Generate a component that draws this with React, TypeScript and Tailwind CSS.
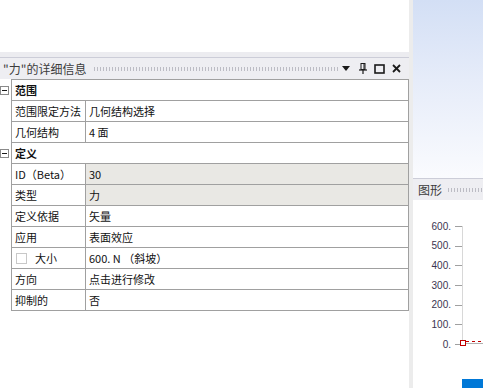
import React from "react";

type Row =
  | { kind: "group"; label: string }
  | { kind: "item"; label: string; value: string; gray?: boolean; check?: boolean };

const rows: Row[] = [
  { kind: "group", label: "范围" },
  { kind: "item", label: "范围限定方法", value: "几何结构选择" },
  { kind: "item", label: "几何结构", value: "4 面" },
  { kind: "group", label: "定义" },
  { kind: "item", label: "ID（Beta）", value: "30", gray: true },
  { kind: "item", label: "类型", value: "力", gray: true },
  { kind: "item", label: "定义依据", value: "矢量" },
  { kind: "item", label: "应用", value: "表面效应" },
  { kind: "item", label: "大小", value: "600. N （斜坡）", check: true },
  { kind: "item", label: "方向", value: "点击进行修改" },
  { kind: "item", label: "抑制的", value: "否" },
];

function Grip() {
  return (
    <div className="h-[4px] flex-1 bg-[radial-gradient(circle,#bcbcc4_0.6px,transparent_0.8px)] bg-[length:3px_2px]" />
  );
}

function Chart() {
  const labels = ["600.", "500.", "400.", "300.", "200.", "100.", "0."];
  return (
    <svg width="70" height="188" viewBox="0 0 70 188" className="block">
      <line x1="49.5" y1="26" x2="49.5" y2="144" stroke="#d8d8d8" strokeWidth="1" />
      <line x1="49" y1="143.5" x2="70" y2="143.5" stroke="#b0b0b0" strokeWidth="1" />
      {labels.map((l, i) => {
        const y = 26 + i * 19.67;
        return (
          <g key={l}>
            <line x1="42" y1={Math.round(y) + 0.5} x2="49" y2={Math.round(y) + 0.5} stroke="#a0a0a0" strokeWidth="1" />
            <text
              x="38"
              y={y + 3.5}
              textAnchor="end"
              fontSize="10"
              fill="#3a3450"
              fontFamily="'Liberation Sans', Arial, sans-serif"
            >
              {l}
            </text>
          </g>
        );
      })}
      <line x1="53" y1="141.5" x2="70" y2="141.5" stroke="#c00000" strokeWidth="1" strokeDasharray="3 3" />
      <rect x="47.5" y="140.5" width="5" height="5" fill="#fff" stroke="#c00000" strokeWidth="1" />
      <rect x="49" y="179" width="21" height="9" fill="#0078d7" />
    </svg>
  );
}

export default function App() {
  return (
    <div className="flex h-[388px] w-[483px] overflow-hidden bg-white font-['Noto_Sans_CJK_SC','Noto_Sans',sans-serif]">
      {/* Left pane */}
      <div className="flex w-[409px] flex-col bg-white">
        <div className="h-[52px] bg-white" />
        <div className="h-[5px] bg-[#ececf0]" />
        <div className="flex h-[22px] items-center border-t border-[#cccdd8] bg-[#eeeef2]">
          <span className="pl-[3px] text-[12px] leading-none text-[#3c3c3c]">"力"的详细信息</span>
          <div className="ml-[7px] mr-[2px] flex flex-1 items-center">
            <Grip />
          </div>
          <svg width="8" height="5" viewBox="0 0 8 5" className="ml-[1px]">
            <polygon points="0,0 8,0 4,5" fill="#1a1a1a" />
          </svg>
          <svg width="8" height="11" viewBox="0 0 8 11" className="ml-[9px]">
            <rect x="2" y="0.5" width="4" height="6" fill="none" stroke="#1a1a1a" strokeWidth="1" />
            <line x1="5" y1="1" x2="5" y2="6.5" stroke="#1a1a1a" strokeWidth="1" />
            <line x1="0" y1="7" x2="8" y2="7" stroke="#1a1a1a" strokeWidth="1.2" />
            <line x1="4" y1="7" x2="4" y2="11" stroke="#1a1a1a" strokeWidth="1.2" />
          </svg>
          <svg width="11" height="10" viewBox="0 0 11 10" className="ml-[7px]">
            <rect x="1" y="1" width="9" height="8" fill="none" stroke="#1a1a1a" strokeWidth="1.6" />
          </svg>
          <svg width="9" height="9" viewBox="0 0 9 9" className="ml-[7px] mr-[8px]">
            <line x1="1" y1="1" x2="8" y2="8" stroke="#1a1a1a" strokeWidth="1.8" />
            <line x1="8" y1="1" x2="1" y2="8" stroke="#1a1a1a" strokeWidth="1.8" />
          </svg>
        </div>
        <div className="flex flex-col">
          <div className="ml-[11px] h-px bg-[#a0a0a0]" />
          {rows.map((r, i) => (
            <div key={i} className="flex h-[21px]">
              <div className="flex w-[11px] items-center">
                {r.kind === "group" && (
                  <div className="flex h-[9px] w-[9px] items-center justify-center border border-[#8a8a8a] bg-white">
                    <div className="h-px w-[5px] bg-[#1a1a1a]" />
                  </div>
                )}
              </div>
              <div className="flex flex-1 border-b border-l border-r border-[#a0a0a0] text-[11px] leading-none text-[#111]">
                {r.kind === "group" ? (
                  <div className="flex items-center pl-[3px] font-bold">{r.label}</div>
                ) : (
                  <>
                    <div className="flex w-[74px] items-center border-r border-[#a0a0a0] pl-[3px]">
                      {r.check && (
                        <div className="mr-[8px] ml-[1px] h-[11px] w-[11px] border border-[#c8c8c8] bg-white" />
                      )}
                      {r.label}
                    </div>
                    <div className={`flex flex-1 items-center pl-[3px] ${r.gray ? "bg-[#e9e8e4]" : "bg-white"}`}>
                      {r.value}
                    </div>
                  </>
                )}
              </div>
            </div>
          ))}
        </div>
      </div>
      {/* Separator */}
      <div className="w-[4px] bg-[#ececec]" />
      {/* Right pane */}
      <div className="flex flex-1 flex-col">
        <div className="h-[178px] bg-[linear-gradient(to_bottom,#d3dff5,#e6ecf9_45%,#fafbfe)]" />
        <div className="flex h-[22px] items-center border-t border-[#cccdd8] bg-[#eeeef2]">
          <span className="pl-[5px] text-[12px] leading-none text-[#3c3c3c]">图形</span>
          <div className="ml-[5px] flex flex-1 items-center">
            <Grip />
          </div>
        </div>
        <div className="flex-1 bg-white">
          <Chart />
        </div>
      </div>
    </div>
  );
}
